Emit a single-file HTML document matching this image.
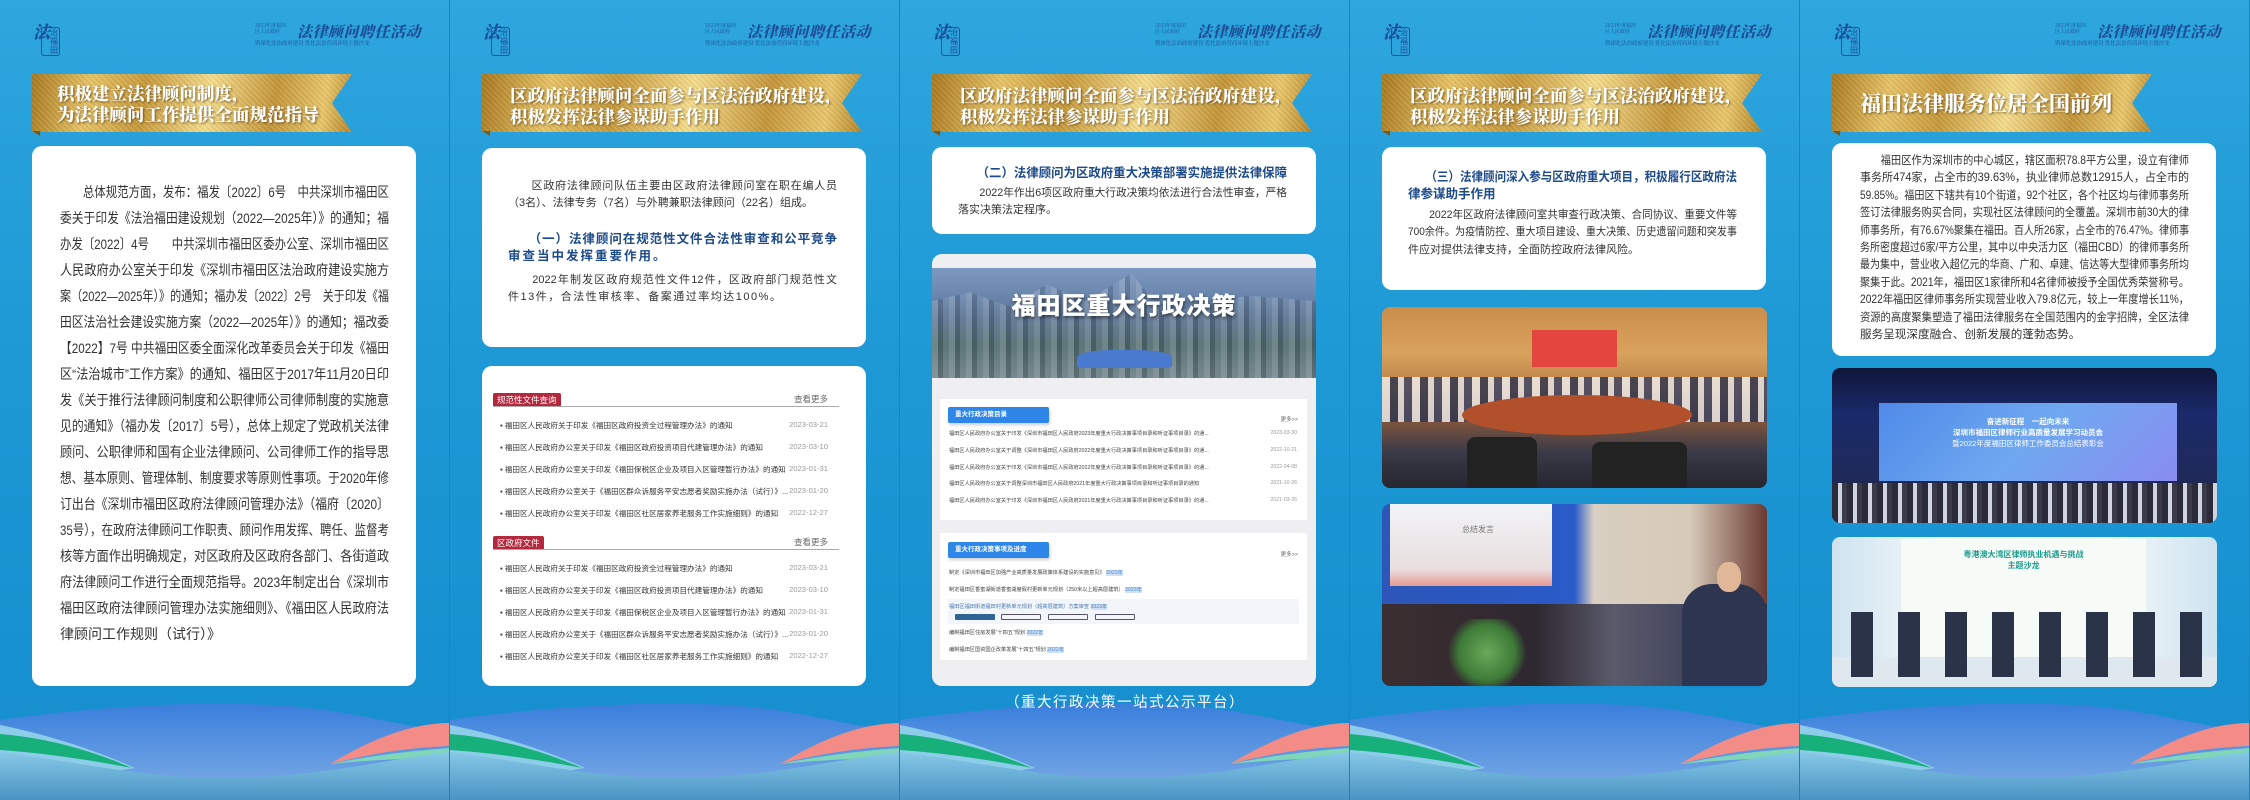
<!DOCTYPE html>
<html><head><meta charset="utf-8">
<style>
*{margin:0;padding:0;box-sizing:border-box}
body{width:2250px;height:800px;overflow:hidden;background:#1f98d6;font-family:"Liberation Sans","Noto Sans CJK SC",sans-serif}
.p{position:absolute;top:0;width:450px;height:800px;overflow:hidden;background:linear-gradient(180deg,#2ea6de 0%,#1f9ad6 40%,#1790cf 85%,#1a8fcf 100%);border-right:1px solid #1a84be}
.logo{position:absolute;left:33px;top:18px;width:28px;height:30px;color:#1b4f9a;font-family:"Noto Serif CJK SC",serif;font-weight:900}
.logo .a{position:absolute;left:0;top:0;font-size:17px;font-style:italic}
.logo .b{position:absolute;left:8px;top:9px;font-size:8px;line-height:9px;border:1px solid #1b4f9a;border-radius:3px;padding:0 1px;width:19px;text-align:right;font-family:"Noto Sans CJK SC",sans-serif;font-weight:400}
.hd{position:absolute;left:255px;top:22px;width:162px;height:26px;color:#1d4f98}
.hd .s{position:absolute;left:0;top:1px;font-size:5px;line-height:6px;font-family:"Noto Serif CJK SC",serif}
.hd .t{position:absolute;left:42px;top:-1px;font-size:15px;font-weight:900;font-style:italic;font-family:"Noto Serif CJK SC",serif;letter-spacing:0.5px;white-space:nowrap}
.hd .u{position:absolute;left:0;top:17px;font-size:5.4px;white-space:nowrap;font-family:"Noto Serif CJK SC",serif}
.ban{position:absolute;left:32px;top:74px;height:58px;background:linear-gradient(100deg,#a9791f 0%,#e8c467 18%,#c89a3c 35%,#f5dd8c 55%,#c5963a 75%,#e9c86c 90%,#b58427 100%);clip-path:polygon(0 0,100% 0,calc(100% - 20px) 50%,100% 100%,0 100%)}
.ban::after{content:"";position:absolute;inset:0;background:repeating-linear-gradient(45deg,rgba(255,255,255,.06) 0 2px,rgba(0,0,0,.05) 2px 4px)}
.fold{position:absolute;left:32px;top:131px;width:8px;height:5px;background:#7a5a1a;clip-path:polygon(0 0,100% 0,100% 100%)}
.bt{position:absolute;left:28px;top:11px;font-family:"Noto Serif CJK SC",serif;font-weight:900;color:#fff;font-size:17.5px;line-height:21px;text-shadow:1px 1px 2px rgba(80,50,0,.7);white-space:nowrap;z-index:2}
.card{position:absolute;left:32px;width:384px;background:#fff;border-radius:10px}
.L{position:absolute;left:28px;width:329px;white-space:nowrap;color:#333;text-align:left}
.L.h{color:#1d4a8a;font-weight:700}
.f14{font-size:14px;line-height:18px}
.f11{font-size:11px;line-height:14px}
.f12{font-size:12.5px;line-height:16px}
.f115{font-size:11.6px;line-height:15px}
.wave{position:absolute;left:0;top:680px}
.ph{position:absolute;left:32px;width:385px;border-radius:8px;overflow:hidden}
.row{position:absolute;left:18px;right:38px;font-size:7.6px;color:#333;white-space:nowrap}
.row span{position:absolute;right:0;color:#999}
.tag{position:absolute;left:11px;background:#b3283d;color:#fff;font-size:8.5px;padding:1px 4px;border-radius:2px}
.more{position:absolute;right:38px;font-size:8.5px;color:#666}
.ln{position:absolute;left:11px;right:27px;height:1px;background:#aaa}
.r3{position:absolute;left:9px;right:10px;font-size:5.2px;color:#444;white-space:nowrap}
.r3 span{position:absolute;right:0;color:#999}
.btab{position:absolute;left:8px;width:101px;height:16px;background:#2d86e8;color:#fff;font-size:6.5px;font-weight:700;line-height:16px;padding-left:7px;border-radius:2px;box-shadow:1px 2px 3px rgba(0,0,0,.2)}
</style></head><body>

<svg width="0" height="0" style="position:absolute">
<defs>
<linearGradient id="hg" x1="0" y1="0" x2="0" y2="1"><stop offset="0" stop-color="#3a7fdc"/><stop offset="1" stop-color="#80aee6"/></linearGradient>
<linearGradient id="bg2" x1="0" y1="0" x2="0" y2="1"><stop offset="0" stop-color="#86c8e6"/><stop offset="1" stop-color="#4a93c4"/></linearGradient>
<g id="wv">
<path d="M0 40 C100 26,200 20,290 26 C350 31,390 44,450 52 L450 120 L0 120Z" fill="url(#hg)"/>
<path d="M330 84 C370 60,410 43,450 43 L450 66 C400 68,360 76,330 84Z" fill="#f38b86"/>
<path d="M330 84 C380 74,420 70,450 68 L450 78 C410 78,370 80,330 84Z" fill="#80d6b8"/>
<path d="M0 45 C50 55,100 72,135 88 L0 110Z" fill="#8ecde9"/>
<path d="M0 54 C50 58,95 72,132 88 C90 80,45 73,0 70Z" fill="#18b07a"/>
<path d="M0 72 C80 82,150 100,240 98 C330 95,380 80,450 72 L450 120 L0 120Z" fill="url(#bg2)"/>
</g>
</defs></svg>

<!-- PANEL 1 -->
<div class="p" style="left:0">
<div class="logo"><span class="a">法</span><span class="b">治<br>福田</span></div>
<div class="hd"><div class="s">2023年度福田<br>区人民政府</div><div class="t">法律顾问聘任活动</div><div class="u">暨深化法治政府建设 优化法治营商环境主题沙龙</div></div>
<div class="ban" style="width:320px"><div class="bt" style="left:25px;top:9px">积极建立法律顾问制度，<br>为法律顾问工作提供全面规范指导</div></div><div class="fold"></div>
<div class="card" style="top:146px;height:540px">
<div class="L f14" style="top:37px"><span>　　总体规范方面，发布：福发〔2022〕6号　中共深圳市福田区</span></div>
<div class="L f14" style="top:63px"><span>委关于印发《法治福田建设规划（2022—2025年）》的通知；福</span></div>
<div class="L f14" style="top:89px"><span>办发〔2022〕4号　　中共深圳市福田区委办公室、深圳市福田区</span></div>
<div class="L f14" style="top:115px"><span>人民政府办公室关于印发《深圳市福田区法治政府建设实施方</span></div>
<div class="L f14" style="top:141px"><span>案（2022—2025年）》的通知；福办发〔2022〕2号　关于印发《福</span></div>
<div class="L f14" style="top:167px"><span>田区法治社会建设实施方案（2022—2025年）》的通知；福改委</span></div>
<div class="L f14" style="top:193px"><span>【2022】7号 中共福田区委全面深化改革委员会关于印发《福田</span></div>
<div class="L f14" style="top:219px"><span>区“法治城市”工作方案》的通知、福田区于2017年11月20日印</span></div>
<div class="L f14" style="top:245px"><span>发《关于推行法律顾问制度和公职律师公司律师制度的实施意</span></div>
<div class="L f14" style="top:271px"><span>见的通知》（福办发〔2017〕5号），总体上规定了党政机关法律</span></div>
<div class="L f14" style="top:297px"><span>顾问、公职律师和国有企业法律顾问、公司律师工作的指导思</span></div>
<div class="L f14" style="top:323px"><span>想、基本原则、管理体制、制度要求等原则性事项。于2020年修</span></div>
<div class="L f14" style="top:349px"><span>订出台《深圳市福田区政府法律顾问管理办法》（福府〔2020〕</span></div>
<div class="L f14" style="top:375px"><span>35号），在政府法律顾问工作职责、顾问作用发挥、聘任、监督考</span></div>
<div class="L f14" style="top:401px"><span>核等方面作出明确规定，对区政府及区政府各部门、各街道政</span></div>
<div class="L f14" style="top:427px"><span>府法律顾问工作进行全面规范指导。2023年制定出台《深圳市</span></div>
<div class="L f14" style="top:453px"><span>福田区政府法律顾问管理办法实施细则》、《福田区人民政府法</span></div>
<div class="L f14 e" style="top:479px"><span>律顾问工作规则（试行）》</span></div>
</div>
<svg class="wave" width="450" height="120"><use href="#wv"/></svg>
</div>

<!-- PANEL 2 -->
<div class="p" style="left:450px">
<div class="logo"><span class="a">法</span><span class="b">治<br>福田</span></div>
<div class="hd"><div class="s">2023年度福田<br>区人民政府</div><div class="t">法律顾问聘任活动</div><div class="u">暨深化法治政府建设 优化法治营商环境主题沙龙</div></div>
<div class="ban" style="width:380px"><div class="bt">区政府法律顾问全面参与区法治政府建设，<br>积极发挥法律参谋助手作用</div></div><div class="fold"></div>
<div class="card" style="top:148px;height:199px">
<div class="L f11" style="left:26px;top:31px"><span>　　区政府法律顾问队伍主要由区政府法律顾问室在职在编人员</span></div>
<div class="L f11 e" style="left:26px;top:48px"><span>（3名）、法律专务（7名）与外聘兼职法律顾问（22名）组成。</span></div>
<div class="L f12 h" style="left:26px;top:83px"><span>　　（一）法律顾问在规范性文件合法性审查和公平竞争</span></div>
<div class="L f12 h e" style="left:26px;top:100px;letter-spacing:2px"><span>审查当中发挥重要作用。</span></div>
<div class="L f11" style="left:26px;top:125px"><span>　　2022年制发区政府规范性文件12件，区政府部门规范性文</span></div>
<div class="L f11 e" style="left:26px;top:142px;letter-spacing:1.5px"><span>件13件，合法性审核率、备案通过率均达100%。</span></div>
</div>
<div class="card" style="top:366px;height:320px">
<div class="tag" style="top:27px">规范性文件查询</div><div class="more" style="top:27px">查看更多</div><div class="ln" style="top:40px"></div>
<div class="row" style="top:54px">▪ 福田区人民政府关于印发《福田区政府投资全过程管理办法》的通知<span>2023-03-21</span></div>
<div class="row" style="top:76px">▪ 福田区人民政府办公室关于印发《福田区政府投资项目代建管理办法》的通知<span>2023-03-10</span></div>
<div class="row" style="top:98px">▪ 福田区人民政府办公室关于印发《福田保税区企业及项目入区管理暂行办法》的通知<span>2023-01-31</span></div>
<div class="row" style="top:120px">▪ 福田区人民政府办公室关于《福田区群众诉服务平安志愿者奖励实施办法（试行）》...<span>2023-01-20</span></div>
<div class="row" style="top:142px">▪ 福田区人民政府办公室关于印发《福田区社区居家养老服务工作实施细则》的通知<span>2022-12-27</span></div>
<div class="tag" style="top:170px">区政府文件</div><div class="more" style="top:170px">查看更多</div><div class="ln" style="top:183px"></div>
<div class="row" style="top:197px">▪ 福田区人民政府关于印发《福田区政府投资全过程管理办法》的通知<span>2023-03-21</span></div>
<div class="row" style="top:219px">▪ 福田区人民政府办公室关于印发《福田区政府投资项目代建管理办法》的通知<span>2023-03-10</span></div>
<div class="row" style="top:241px">▪ 福田区人民政府办公室关于印发《福田保税区企业及项目入区管理暂行办法》的通知<span>2023-01-31</span></div>
<div class="row" style="top:263px">▪ 福田区人民政府办公室关于《福田区群众诉服务平安志愿者奖励实施办法（试行）》...<span>2023-01-20</span></div>
<div class="row" style="top:285px">▪ 福田区人民政府办公室关于印发《福田区社区居家养老服务工作实施细则》的通知<span>2022-12-27</span></div>
</div>
<svg class="wave" width="450" height="120"><use href="#wv"/></svg>
</div>

<!-- PANEL 3 -->
<div class="p" style="left:900px">
<div class="logo"><span class="a">法</span><span class="b">治<br>福田</span></div>
<div class="hd"><div class="s">2023年度福田<br>区人民政府</div><div class="t">法律顾问聘任活动</div><div class="u">暨深化法治政府建设 优化法治营商环境主题沙龙</div></div>
<div class="ban" style="width:380px"><div class="bt">区政府法律顾问全面参与区法治政府建设，<br>积极发挥法律参谋助手作用</div></div><div class="fold"></div>
<div class="card" style="top:147px;height:87px">
<div class="L f12 h" style="left:26px;top:18px"><span>　　（二）法律顾问为区政府重大决策部署实施提供法律保障</span></div>
<div class="L f11" style="left:26px;top:39px"><span>　　2022年作出6项区政府重大行政决策均依法进行合法性审查，严格</span></div>
<div class="L f11 e" style="left:26px;top:56px"><span>落实决策法定程序。</span></div>
</div>
<div class="card" style="top:254px;height:432px;background:#efeff1;overflow:hidden">
<div style="position:absolute;left:0;top:14px;width:384px;height:110px;background:linear-gradient(180deg,#7d99bf 0%,#6a86ad 25%,#5b7391 45%,#4f6a6e 70%,#6c7f86 100%)">
<div style="position:absolute;inset:0;background:repeating-linear-gradient(90deg,rgba(255,255,255,.18) 0 6px,rgba(0,0,0,.12) 6px 11px,rgba(255,255,255,.08) 11px 17px);clip-path:polygon(0 30%,10% 22%,20% 35%,30% 15%,40% 30%,52% 5%,60% 40%,70% 35%,82% 25%,100% 30%,100% 100%,0 100%)"></div>
<div style="position:absolute;left:145px;top:82px;width:95px;height:18px;background:#4a7ad0;border-radius:40% 40% 10% 10%"></div>
<div style="position:absolute;left:0;right:0;top:18px;text-align:center;color:#fff;font-size:24px;font-weight:900;text-shadow:1px 2px 3px rgba(0,0,0,.5);letter-spacing:1px">福田区重大行政决策</div>
</div>
<div style="position:absolute;left:8px;top:145px;width:367px;height:121px;background:#fff">
<div class="btab" style="top:8px">重大行政决策目录</div><div style="position:absolute;right:9px;top:16px;font-size:5.5px;color:#666">更多&gt;&gt;</div>
<div class="r3" style="top:31px">福田区人民政府办公室关于印发《深圳市福田区人民政府2023年度重大行政决策事项目录和听证事项目录》的通...<span>2023-03-30</span></div>
<div class="r3" style="top:48px">福田区人民政府办公室关于调整《深圳市福田区人民政府2022年度重大行政决策事项目录和听证事项目录》的通...<span>2022-10-21</span></div>
<div class="r3" style="top:65px">福田区人民政府办公室关于印发《深圳市福田区人民政府2022年度重大行政决策事项目录和听证事项目录》的通...<span>2022-04-08</span></div>
<div class="r3" style="top:81px">福田区人民政府办公室关于调整深圳市福田区人民政府2021年度重大行政决策事项目录和听证事项目录的通知<span>2021-10-26</span></div>
<div class="r3" style="top:98px">福田区人民政府办公室关于印发《深圳市福田区人民政府2021年度重大行政决策事项目录和听证事项目录》的通...<span>2021-03-26</span></div>
</div>
<div style="position:absolute;left:8px;top:279px;width:367px;height:127px;background:#fff">
<div class="btab" style="top:9px">重大行政决策事项及进度</div><div style="position:absolute;right:9px;top:17px;font-size:5.5px;color:#666">更多&gt;&gt;</div>
<div class="r3" style="top:36px">制定《深圳市福田区加强产业高质量发展政策体系建设的实施意见》 <i style="background:#cfe0f7;color:#48c;font-style:normal">2023年</i></div>
<div class="r3" style="top:53px">制定福田区香蜜湖街道香蜜湖度假村更新单元规划（250米以上超高层建筑） <i style="background:#cfe0f7;color:#48c;font-style:normal">2023年</i></div>
<div style="position:absolute;left:8px;right:8px;top:66px;height:25px;background:#f2f6fb"></div>
<div class="r3" style="top:70px;color:#4a7ab0">福田区福田街道福田村更新单元规划（超高层建筑）方案审查 <i style="background:#cfe0f7;font-style:normal">2023年</i></div>
<div style="position:absolute;left:15px;top:81px;width:40px;height:6px;background:#2f6595;border-radius:1px"></div>
<div style="position:absolute;left:61px;top:81px;width:40px;height:6px;border:1px solid #556;border-radius:1px"></div>
<div style="position:absolute;left:108px;top:81px;width:40px;height:6px;border:1px solid #556;border-radius:1px"></div>
<div style="position:absolute;left:155px;top:81px;width:40px;height:6px;border:1px solid #556;border-radius:1px"></div>
<div class="r3" style="top:96px">编制福田区住房发展“十四五”规划 <i style="background:#cfe0f7;color:#48c;font-style:normal">2022年</i></div>
<div class="r3" style="top:113px">编制福田区国资国企改革发展“十四五”规划 <i style="background:#cfe0f7;color:#48c;font-style:normal">2022年</i></div>
</div>
</div>
<svg class="wave" width="450" height="120"><use href="#wv"/></svg>
<div style="position:absolute;left:0;width:450px;top:691px;text-align:center;color:#fff;font-size:14.5px;letter-spacing:1.5px;z-index:3">（重大行政决策一站式公示平台）</div>
</div>

<!-- PANEL 4 -->
<div class="p" style="left:1350px">
<div class="logo"><span class="a">法</span><span class="b">治<br>福田</span></div>
<div class="hd"><div class="s">2023年度福田<br>区人民政府</div><div class="t">法律顾问聘任活动</div><div class="u">暨深化法治政府建设 优化法治营商环境主题沙龙</div></div>
<div class="ban" style="width:380px"><div class="bt">区政府法律顾问全面参与区法治政府建设，<br>积极发挥法律参谋助手作用</div></div><div class="fold"></div>
<div class="card" style="top:147px;height:143px">
<div class="L f12 h" style="left:26px;top:22px"><span>　　（三）法律顾问深入参与区政府重大项目，积极履行区政府法</span></div>
<div class="L f12 h e" style="left:26px;top:39px"><span>律参谋助手作用</span></div>
<div class="L f11" style="left:26px;top:61px"><span>　　2022年区政府法律顾问室共审查行政决策、合同协议、重要文件等</span></div>
<div class="L f11" style="left:26px;top:78px"><span>700余件。为疫情防控、重大项目建设、重大决策、历史遗留问题和突发事</span></div>
<div class="L f11 e" style="left:26px;top:96px"><span>件应对提供法律支持，全面防控政府法律风险。</span></div>
</div>
<div class="ph" style="top:307px;height:181px;background:linear-gradient(180deg,#c98e4a 0%,#d9a25c 25%,#b98048 45%,#8c5a3a 60%,#3a3a48 80%,#262630 100%)">
<div style="position:absolute;left:150px;top:23px;width:85px;height:37px;background:#e2463e"></div>
<div style="position:absolute;left:0;right:0;top:70px;height:45px;background:repeating-linear-gradient(90deg,#f2f2f4 0 8px,#2a3450 8px 16px,#e8e8ec 16px 22px,#3b4466 22px 30px);opacity:.8"></div>
<div style="position:absolute;left:80px;top:88px;width:230px;height:40px;background:#b3502c;border-radius:50%"></div>
<div style="position:absolute;left:85px;top:130px;width:70px;height:51px;background:#222;border-radius:8px 8px 0 0"></div>
<div style="position:absolute;left:210px;top:135px;width:95px;height:46px;background:#222;border-radius:8px 8px 0 0"></div>
</div>
<div class="ph" style="top:504px;height:182px;background:linear-gradient(90deg,#2c56b8 0%,#2a5bc8 50%,#d9cfc2 55%,#d6cab8 80%,#6b3a32 100%)">
<div style="position:absolute;left:8px;top:0;width:162px;height:82px;background:linear-gradient(180deg,#f2f4f8,#e8dede 80%,#e89a94)"></div>
<div style="position:absolute;left:80px;top:20px;font-size:8px;color:#777">总结发言</div>
<div style="position:absolute;left:0;right:0;top:100px;height:82px;background:linear-gradient(90deg,#3b2e30 0%,#2e2830 40%,#5a5a6a 60%,#2b3050 100%)"></div>
<div style="position:absolute;left:60px;top:115px;width:90px;height:67px;background:radial-gradient(circle,#6aaa5a 0%,#3e7a38 50%,transparent 70%)"></div>
<div style="position:absolute;left:300px;top:80px;width:85px;height:102px;background:#2e3550;border-radius:30px 30px 0 0"></div>
<div style="position:absolute;left:335px;top:58px;width:24px;height:30px;background:#e0b898;border-radius:45%"></div>
</div>
<svg class="wave" width="450" height="120"><use href="#wv"/></svg>
</div>

<!-- PANEL 5 -->
<div class="p" style="left:1800px">
<div class="logo"><span class="a">法</span><span class="b">治<br>福田</span></div>
<div class="hd"><div class="s">2023年度福田<br>区人民政府</div><div class="t">法律顾问聘任活动</div><div class="u">暨深化法治政府建设 优化法治营商环境主题沙龙</div></div>
<div class="ban" style="width:320px"><div class="bt" style="top:17px;font-size:21px;line-height:24px">福田法律服务位居全国前列</div></div><div class="fold"></div>
<div class="card" style="top:143px;height:213px">
<div class="L f115" style="top:10px"><span>　　福田区作为深圳市的中心城区，辖区面积78.8平方公里，设立有律师</span></div>
<div class="L f115" style="top:27px"><span>事务所474家，占全市的39.63%，执业律师总数12915人，占全市的</span></div>
<div class="L f115" style="top:45px"><span>59.85%。福田区下辖共有10个街道，92个社区，各个社区均与律师事务所</span></div>
<div class="L f115" style="top:62px"><span>签订法律服务购买合同，实现社区法律顾问的全覆盖。深圳市前30大的律</span></div>
<div class="L f115" style="top:80px"><span>师事务所，有76.67%聚集在福田。百人所26家，占全市的76.47%。律师事</span></div>
<div class="L f115" style="top:97px"><span>务所密度超过6家/平方公里，其中以中央活力区（福田CBD）的律师事务所</span></div>
<div class="L f115" style="top:114px"><span>最为集中，营业收入超亿元的华商、广和、卓建、信达等大型律师事务所均</span></div>
<div class="L f115" style="top:132px"><span>聚集于此。2021年，福田区1家律所和4名律师被授予全国优秀荣誉称号。</span></div>
<div class="L f115" style="top:149px"><span>2022年福田区律师事务所实现营业收入79.8亿元，较上一年度增长11%，</span></div>
<div class="L f115" style="top:167px"><span>资源的高度聚集塑造了福田法律服务在全国范围内的金字招牌，全区法律</span></div>
<div class="L f115 e" style="top:184px"><span>服务呈现深度融合、创新发展的蓬勃态势。</span></div>
</div>
<div class="ph" style="top:368px;height:155px;background:linear-gradient(180deg,#10163a 0%,#1a2a6a 30%,#202a5a 70%,#1a1c2a 100%)">
<div style="position:absolute;left:47px;top:35px;width:298px;height:78px;background:linear-gradient(135deg,#4f8ae8,#6fa8f0 50%,#8a8cf0)"></div>
<div style="position:absolute;left:47px;top:48px;width:298px;text-align:center;color:#fff;font-size:7.5px;line-height:11px;font-weight:700">奋进新征程&emsp;一起向未来<br>深圳市福田区律师行业高质量发展学习动员会<br><span style="font-weight:400">暨2022年度福田区律师工作委员会总结表彰会</span></div>
<div style="position:absolute;left:0;right:0;top:115px;height:40px;background:repeating-linear-gradient(90deg,#2a2a38 0 6px,#cfd4e0 6px 10px,#3a3a48 10px 15px)"></div>
</div>
<div class="ph" style="top:537px;height:150px;background:linear-gradient(90deg,#cfe3f0 0%,#e8f2f6 20%,#f5f8f8 50%,#e8f2f6 80%,#cfe3f0 100%)">
<div style="position:absolute;left:69px;top:2px;width:245px;height:118px;background:#f6fbf8"></div>
<div style="position:absolute;left:69px;top:12px;width:245px;text-align:center;color:#1a9a8a;font-size:8px;font-weight:700;line-height:11px">粤港澳大湾区律师执业机遇与挑战<br>主题沙龙</div>
<div style="position:absolute;left:0;right:0;top:120px;height:30px;background:#dfe8ee"></div>
<div style="position:absolute;left:5px;top:75px;width:375px;height:65px;background:repeating-linear-gradient(90deg,transparent 0 14px,#2b3348 14px 36px,transparent 36px 47px)"></div>
</div>
<svg class="wave" width="450" height="120"><use href="#wv"/></svg>
</div>

<script>
document.querySelectorAll('.L').forEach(function(e){
  var s=e.firstElementChild;
  var w=s.getBoundingClientRect().width, W=e.clientWidth;
  if(w>W){s.style.display='inline-block';s.style.transformOrigin='0 0';s.style.transform='scaleX('+(W/w)+')';}
  else if(!e.classList.contains('e')){e.style.textAlign='justify';e.style.textAlignLast='justify';e.style.whiteSpace='normal';}
});
</script>
</body></html>
